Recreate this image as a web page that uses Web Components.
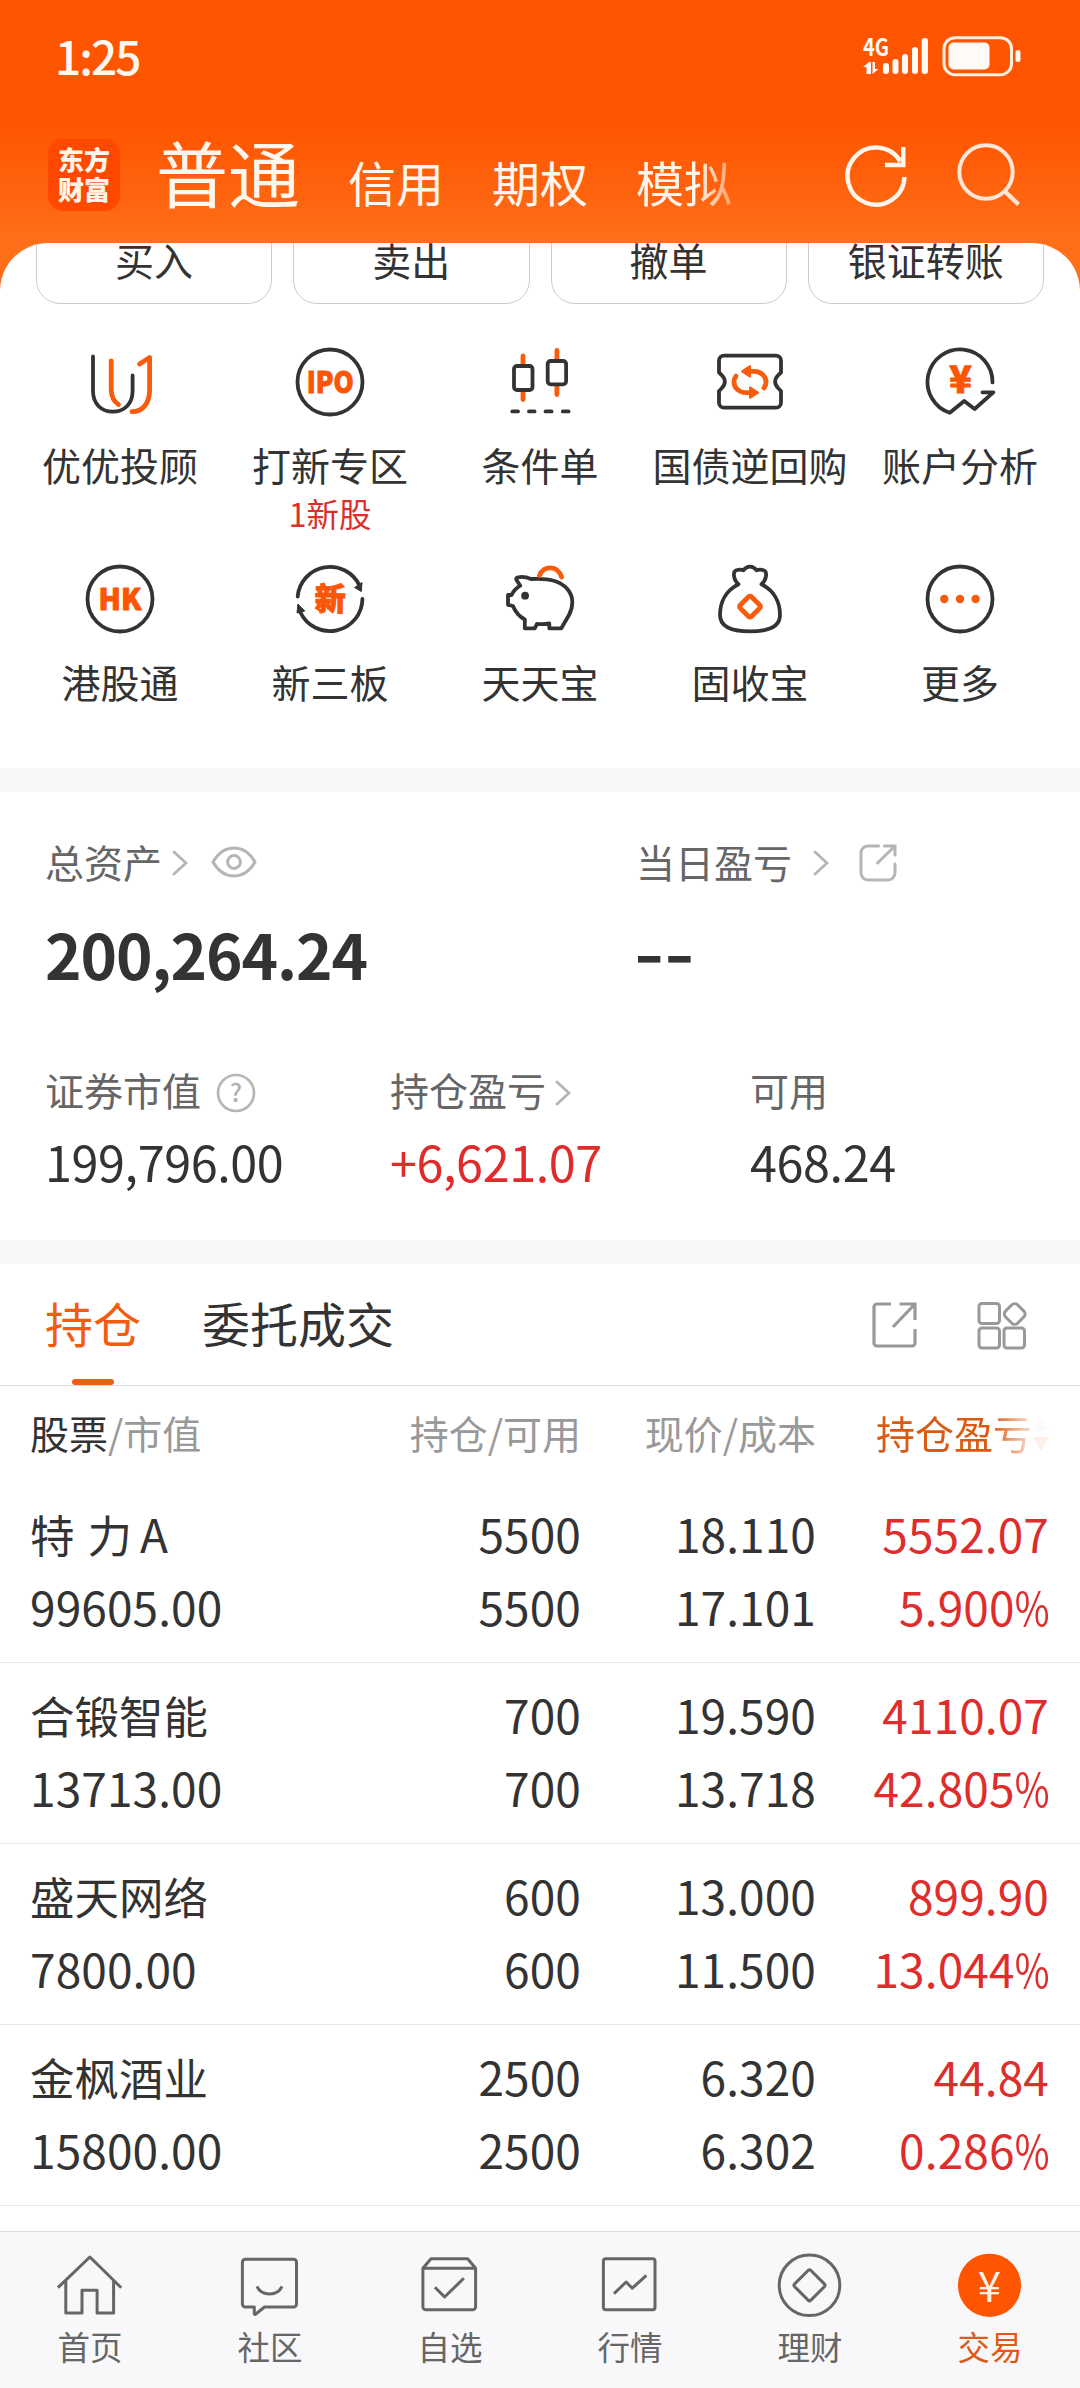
<!DOCTYPE html>
<html lang="zh-CN">
<head>
<meta charset="utf-8">
<title>交易</title>
<style>
html,body{margin:0;padding:0}
body{width:1080px;height:2388px;overflow:hidden;background:#fff;color:#333;font-family:"Noto Sans CJK SC",sans-serif;-webkit-font-smoothing:antialiased}
</style>
</head>
<body>
<trade-app></trade-app>
<script>
const D='stroke="#333" stroke-width="3.8" fill="none" stroke-linejoin="round" stroke-linecap="round"';
const O='stroke="#f95c0d" stroke-width="4.8" fill="none" stroke-linejoin="round" stroke-linecap="round"';
const G='stroke="#666" stroke-width="3" fill="none" stroke-linejoin="round"';
const OT='fill="#fb5607" stroke="#fb5607" stroke-width="1" stroke-linejoin="round" font-weight="900" text-anchor="middle" font-family="Noto Sans CJK SC, sans-serif"';
const ICONS={
 uu:[72,72,`<path ${D} d="M9 10.5V45C9 58 17.5 65.7 28.8 65.7S48.6 58 48.6 45V29.5"/><path ${O} d="M27.2 15V44Q27.6 54 34.5 58.5M55.5 18 65.6 11.5V44C65.6 58 58 65.7 47.9 65.7"/>`],
 ipo:[72,72,`<circle cx="36" cy="36" r="32.5" ${D}/><text x="36.3" y="47" font-size="30" textLength="47" lengthAdjust="spacingAndGlyphs" ${OT}>IPO</text>`],
 candle:[72,72,`<path ${O} d="M19 10V18M19 46V53.5M52.9 4.5V13M52.9 40V48.5"/><rect x="10" y="20" width="18.5" height="24" rx="3" ${D}/><rect x="43.7" y="15" width="18.4" height="23.3" rx="3" ${D}/><path ${D} stroke-width="4.2" d="M8.3 65.4H14M25 65.4H30.6M41.5 65.4H47.6M58.8 65.4H64.6"/>`],
 ticket:[72,72,`<path ${D} d="M10 9.7H62a5 5 0 0 1 5 5V26.5L64.5 28.8C60 33 60 38 64.5 42.5L67 45V56.7a5 5 0 0 1-5 5H10a5 5 0 0 1-5-5V45L7.5 42.5C12 38 12 33 7.5 28.8L5 26.5V14.7a5 5 0 0 1 5-5Z"/><g id="h"><path ${O} d="M36 25.4H40C48 25.4 52 31 52 36Q52 39.5 50 42"/><path d="M28 25.4 36 20.2V30.6Z" fill="#f95c0d" stroke="#f95c0d" stroke-width="2" stroke-linejoin="round"/></g><use href="#h" transform="rotate(180 36 36)"/>`],
 analysis:[72,72,`<path ${D} stroke-linejoin="miter" d="M68.5 36.4A32.5 32.5 0 1 0 25.8 66.8L40.2 55 50.6 63 69.3 46.3H58.5"/><text x="36.5" y="46.8" font-size="37" ${OT}>¥</text>`],
 hk:[72,72,`<circle cx="36" cy="36" r="32.5" ${D}/><text x="36" y="47" font-size="30" textLength="43" lengthAdjust="spacingAndGlyphs" ${OT}>HK</text>`],
 xsb:[72,72,`<path ${D} d="M3.7 33.5A32.5 32.5 0 0 1 65.5 22.5M68.4 36A32.5 32.5 0 0 1 6.5 49.5"/><path fill="#333" d="M60.6 24.500 68 19.500 67.300 28.500ZM3.900 41 3 50 10.800 48Z" stroke="#333" stroke-linejoin="round"/><text x="36.3" y="47.2" font-size="31" ${OT}>新</text>`],
 pig:[72,72,`<path ${D} d="M4 32H7.6Q10 26.500 16.300 22.700L12.500 17Q11.500 14.800 14 14.300Q20 13 27 16Q42 15.300 49 17.500C62 21 68.300 30 68.300 39Q68.300 46 65 52L57.300 65.300H45.300V60.500Q39 61.500 33 60.800L30.800 65.300H20.800V56.500Q12.500 52 9 43L4 41.800Z"/><circle cx="21.100" cy="32.700" r="3.900" fill="#333"/><path ${O} d="M35.500 12.500C39.500 2 53.500 2 57.600 14"/>`],
 bag:[72,72,`<path ${D} d="M24.500 21.300C19.500 17 17.500 7 24 6.800Q27 6.200 29.500 7.300Q32 3.600 36 3.600T42.500 7.300Q45 6.200 48 6.800C54.500 7 52.500 17 47.500 21.300C60 27.500 66 39 66 52C66 64 53 68.400 36 68.400S6 64 6 52C6 39 12 27.500 24.500 21.300Z"/><rect x="28" y="35.600" width="16" height="16" rx="2" transform="rotate(45 36 43.600)" ${O} />`],
 more:[72,72,`<circle cx="36" cy="36" r="32.500" ${D}/><g fill="#f35c0e"><circle cx="20.300" cy="36" r="4.200"/><circle cx="36" cy="36" r="4.200"/><circle cx="51.600" cy="36" r="4.200"/></g>`],
 refresh:[72,72,`<path d="M64.500 37A28.500 28.500 0 1 1 60.500 21.500M63.300 7V25H45" fill="none" stroke="#fff5ec" stroke-width="4.400"/>`],
 search:[72,72,`<g fill="none" stroke="#ffe6d6"><circle cx="33" cy="32" r="26.700" stroke-width="4"/><path d="M52 51.500 65.500 64.500" stroke-width="4.400"/></g>`],
 chevron:[16,26,`<path d="M2 2 14 13 2 24" fill="none" stroke="#b5b5b5" stroke-width="2.800" stroke-linecap="round"/>`],
 eye:[46,34,`<path d="M2 17Q10 3 23 3T44 17Q36 31 23 31T2 17Z" fill="none" stroke="#b5b5b5" stroke-width="3" stroke-linejoin="round"/><circle cx="23" cy="17" r="6.400" fill="none" stroke="#b5b5b5" stroke-width="3"/>`],
 share:[38,38,`<path d="M19.500 2H9a7 7 0 0 0-7 7V29a7 7 0 0 0 7 7H29a7 7 0 0 0 7-7V20M25.500 2H36V11M35 3 18.500 19" fill="none" stroke="#b5b5b5" stroke-width="3" stroke-linecap="round"/>`],
 help:[40,40,`<circle cx="20" cy="20" r="18" fill="none" stroke="#b5b5b5" stroke-width="2.600"/><text x="20" y="29" font-size="25" fill="#b0b0b0" text-anchor="middle" font-weight="500" font-family="Noto Sans CJK SC, sans-serif">?</text>`],
 share2:[48,48,`<path d="M20 3H6a3 3 0 0 0-3 3V42a3 3 0 0 0 3 3H41a3 3 0 0 0 3-3V28M28.500 3H44V19M43 4 22 26" fill="none" stroke="#999" stroke-width="3.200"/>`],
 grid:[50,50,`<g fill="none" stroke="#999" stroke-width="3"><rect x="2" y="2.500" width="20.500" height="20" rx="3"/><rect x="2" y="27" width="20.500" height="20" rx="3"/><rect x="27" y="27" width="20.500" height="20" rx="3"/><rect x="29.200" y="4.500" width="17" height="17" rx="4" transform="rotate(45 37.700 13)"/></g>`],
 home:[72,72,`<path ${G} stroke-linejoin="miter" d="M3.900 38.700 35.900 8 67.200 38.700M11.800 32V64H28V41.300H43.100V64H59.600V32"/>`],
 social:[72,72,`<path ${G} d="M11.400 10.300H59.500a3 3 0 0 1 3 3V55a3 3 0 0 1-3 3H30.500L21.200 65.500 20.300 65V58H11.400a3 3 0 0 1-3-3V13.300a3 3 0 0 1 3-3ZM22.900 37.300Q26.500 45 35.500 45T48 37.300"/>`],
 watch:[72,72,`<path ${G} d="M8.900 19.300 17 9.700H53.600L61.600 19.300V57.700a3 3 0 0 1-3 3H11.900a3 3 0 0 1-3-3ZH61.600M20.900 38.300 30.600 48 49.800 29.300"/>`],
 quote:[72,72,`<rect ${G} x="9.400" y="9.700" width="51.600" height="51" rx="2.500"/><path ${G} stroke-width="3.400" stroke-linejoin="miter" d="M20 44.700 32.100 33 38.300 39.200 52.400 26.300"/>`],
 wealth:[72,72,`<circle ${G} stroke-width="2.800" cx="35.500" cy="36.300" r="30.300"/><rect ${G} x="24" y="24.800" width="23" height="23" rx="2" transform="rotate(45 35.500 36.300)"/>`],
 trade:[72,72,`<circle cx="35.500" cy="36.300" r="31.600" fill="#ff5500"/><text x="35.500" y="53.200" font-size="42" fill="#fff3e8" text-anchor="middle" font-family="Noto Sans CJK SC, sans-serif">¥</text>`],
 sort:[18,36,`<path d="M9 1 17 15H1Z" fill="#ddd"/><path d="M9 35 17 21H1Z" fill="#fa9a6e"/>`],
 status:[160,42,`<g fill="#fffaf5"><text x="0" y="20" font-size="24" font-weight="700" textLength="26" lengthAdjust="spacingAndGlyphs" font-family="Noto Sans CJK SC, sans-serif">4G</text><path d="M0 31 6 26V38H3.500V31ZM15.500 33 9.500 38V26H12V33ZM6 26H8V38H6Z"/><rect x="20" y="27" width="6" height="11" rx="3"/><rect x="29.500" y="23" width="6" height="15" rx="3"/><rect x="39" y="18" width="6" height="20" rx="3"/><rect x="49" y="11" width="6" height="27" rx="3"/><rect x="58.700" y="2" width="6.300" height="36" rx="3"/><rect x="85.500" y="6.500" width="41" height="27" rx="5"/><rect x="152.500" y="14" width="5" height="12" rx="2.500"/></g><rect x="81" y="1.700" width="67.500" height="37" rx="11" fill="none" stroke="#fff0e2" stroke-width="3"/>`]
};
class Base extends HTMLElement{
  connectedCallback(){
    if(this.shadowRoot)return;
    const t=document.createElement('template');
    t.innerHTML=`<style>${this.css()}</style>${this.html()}`;
    this.attachShadow({mode:'open'}).append(t.content.cloneNode(true));
  }
  a(n){return this.getAttribute(n)||''}
}
const def=(n,css,html)=>customElements.define(n,class extends Base{css(){return css}html(){return html(this)}});

customElements.define('x-icon',class extends Base{
  css(){const[w,h]=ICONS[this.a('name')];return `:host{display:block;flex:none;width:${w}px;height:${h}px}svg{display:block}`}
  html(){const[w,h,s]=ICONS[this.a('name')];return `<svg width="${w}" height="${h}" viewBox="0 0 ${w} ${h}">${s}</svg>`}
});

def('status-bar',`:host{display:flex;justify-content:space-between;align-items:flex-start;padding:36px 57px 0 55px;height:76px}
 .t{font-size:46px;line-height:38px;font-weight:500;color:#fff8f0;letter-spacing:-2px}`,
 ()=>`<div class="t">1:25</div><x-icon name="status"></x-icon>`);

def('app-logo',`:host{display:flex;flex-direction:column;align-items:center;justify-content:center;width:72px;height:72px;border-radius:15px;background:#ff4800;flex:none}
 div{font-size:26px;line-height:30px;font-weight:900;color:#fff6ea}div:last-child{padding-bottom:2px}`,
 ()=>`<div>东方</div><div>财富</div>`);

def('account-header',`:host{display:flex;height:131px;padding-left:48px;align-items:flex-start}
 app-logo{margin-top:27px}
 nav{display:flex;gap:48px;align-items:baseline;margin:14px 0 0 36px;color:#fff7ee;font-size:48px;line-height:90px;white-space:nowrap}
 b{font-weight:400;font-size:72px}
 span:last-child{-webkit-mask:linear-gradient(90deg,#000 62%,rgba(0,0,0,.4));mask:linear-gradient(90deg,#000 62%,rgba(0,0,0,.4))}
 .r{margin:28px 0 0 108px}.s{margin:28px 0 0 41px}`,
 ()=>`<app-logo></app-logo><nav><b>普通</b><span>信用</span><span>期权</span><span>模拟</span></nav><x-icon class="r" name="refresh"></x-icon><x-icon class="s" name="search"></x-icon>`);

def('order-button',`:host{display:flex;flex:1;height:88px;align-items:center;justify-content:center;border:1px solid #ccc;border-radius:24px;font-size:39px;line-height:50px}`,()=>`<slot></slot>`);

def('feature-item',`:host{display:flex;flex-direction:column;align-items:center;height:217px}
 .l{margin-top:21px;font-size:39px;line-height:50px;white-space:nowrap}
 .n{font-size:32.500px;line-height:48px;color:#db2f2d}`,
 e=>`<x-icon name="${e.a('icon')}"></x-icon><div class="l"><slot></slot></div>${e.a('note')?`<div class="n">${e.a('note')}</div>`:''}`);

def('feature-panel',`:host{display:block;height:525px;background:#fff;border-radius:48px 48px 0 0;overflow:hidden}
 .b{display:flex;gap:21px;padding:0 36px;margin-top:-29px}
 .g{display:grid;grid-template-columns:repeat(5,210px);padding:42px 15px 0}`,
 ()=>`<div class="b">${['买入','卖出','撤单','银证转账'].map(x=>`<order-button>${x}</order-button>`).join('')}</div>
 <div class="g">${[['uu','优优投顾'],['ipo','打新专区','1新股'],['candle','条件单'],['ticket','国债逆回购'],['analysis','账户分析'],['hk','港股通'],['xsb','新三板'],['pig','天天宝'],['bag','固收宝'],['more','更多']].map(([i,l,n])=>`<feature-item icon="${i}" note="${n||''}">${l}</feature-item>`).join('')}</div>`);

def('asset-stat',`:host{display:block}
 .l{display:flex;align-items:center;height:50px;font-size:39px;line-height:50px;color:#666;white-space:nowrap}
 .v{font-size:48.500px;line-height:60px;margin-top:17px;color:#333;white-space:nowrap;letter-spacing:-.4px}
 :host([big]) .v{font-size:62px;line-height:80px;font-weight:700;margin-top:27px;letter-spacing:-1.1px}
 :host([up]) .v{color:#e02b2b}`,
 e=>`<div class="l"><span>${e.a('label')}</span><slot></slot></div><div class="v"><slot name="value"></slot></div>`);

def('asset-summary',`:host{display:block;height:404px;padding:44px 45px 0;background:#fff}
 .a{display:grid;grid-template-columns:591px 1fr}
 .c{display:grid;grid-template-columns:345px 360px 1fr;margin-top:71px}
 .dash{display:inline-block;letter-spacing:0;transform-origin:0 50%;transform:translate(-2px,-3px) scaleX(1.32)}`,
 ()=>`<div class="a">
 <asset-stat big label="总资产"><x-icon name="chevron" style="margin:4px 0 0 10px"></x-icon><x-icon name="eye" style="margin:1px 0 0 23px"></x-icon><span slot="value">200,264.24</span></asset-stat>
 <asset-stat big label="当日盈亏"><x-icon name="chevron" style="margin:4px 0 0 21px"></x-icon><x-icon name="share" style="margin:4px 0 0 30px"></x-icon><span slot="value" class="dash">--</span></asset-stat></div>
 <div class="c">
 <asset-stat label="证券市值"><x-icon name="help" style="margin:8px 0 0 15px"></x-icon><span slot="value">199,796.00</span></asset-stat>
 <asset-stat up label="持仓盈亏"><x-icon name="chevron" style="margin:8px 0 0 9px"></x-icon><span slot="value">+6,621.07</span></asset-stat>
 <asset-stat label="可用"><span slot="value">468.24</span></asset-stat></div>`);

def('tab-item',`:host{display:flex;flex-direction:column;align-items:center;padding-top:33px;font-size:48px;line-height:50px;white-space:nowrap}
 :host([active]){color:#f35b10}
 i{display:none;width:42px;height:6px;border-radius:3px;background:#f35b10;margin-top:32px}
 :host([active]) i{display:block}`,()=>`<slot></slot><i></i>`);

def('holdings-tabs',`:host{display:flex;height:121px;padding-left:45px;gap:61px;border-bottom:1px solid #ddd;background:#fff}
 .i{display:flex;margin:37px 53px 0 auto;gap:58px;align-items:flex-start}`,
 ()=>`<tab-item active>持仓</tab-item><tab-item>委托成交</tab-item><div class="i"><x-icon name="share2"></x-icon><x-icon name="grid"></x-icon></div>`);

const COLS='display:grid;grid-template-columns:300px 251px 235px 234px;padding-left:30px;';
def('holdings-head',`:host{${COLS}height:91px;padding-bottom:5px;align-items:center;font-size:39px;line-height:50px;color:#999;white-space:nowrap}
 div{text-align:right}.f{text-align:left}b{font-weight:400;color:#333}
 .p{display:flex;justify-content:flex-end;align-items:center;color:#db5a12;-webkit-mask:linear-gradient(90deg,#000 175px,rgba(0,0,0,.15) 218px);mask:linear-gradient(90deg,#000 175px,rgba(0,0,0,.15) 218px)}
 x-icon{margin-top:5px}`,
 ()=>`<div class="f"><b>股票</b>/市值</div><div>持仓/可用</div><div>现价/成本</div><div class="p">持仓盈亏<x-icon name="sort"></x-icon></div>`);

def('holding-row',`:host{${COLS}padding-top:15px;padding-bottom:19px;border-bottom:1px solid #e8e8e8;font-size:46px;line-height:73px;white-space:nowrap;letter-spacing:.1px}
 div{text-align:right}.f{text-align:left}.n{font-size:44.500px;letter-spacing:0;word-spacing:3px}.u{color:#dd2e2d;padding-right:1px}
 i{font-style:normal;display:inline-block;transform:scaleX(.82);transform-origin:100% 50%;margin-left:-8px}`,
 e=>`<div class="f n"><slot></slot></div>`+e.a('values').split('|').map((x,i)=>`<div class="${['','','u','f'][i%4]}">${x.replace('%','<i>%</i>')}</div>`).join(''));

def('nav-item',`:host{display:flex;flex-direction:column;align-items:center;flex:1;color:#666;font-size:32.500px;line-height:40px}
 :host([active]){color:#e05a15}div{margin-top:5px}`,e=>`<x-icon name="${e.a('icon')}"></x-icon><div><slot></slot></div>`);

def('bottom-nav',`:host{display:flex;box-sizing:border-box;height:157px;padding-top:17px;border-top:1px solid #ddd;background:#f8f8fb}`,
 ()=>[['home','首页'],['social','社区'],['watch','自选'],['quote','行情'],['wealth','理财']].map(([i,l])=>`<nav-item icon="${i}">${l}</nav-item>`).join('')+`<nav-item icon="trade" active>交易</nav-item>`);

def('trade-app',`:host{display:flex;flex-direction:column;width:1080px;height:2388px;overflow:hidden;background:linear-gradient(#ff5500 0,#ff5500 125px,#ff6f1a 245px,#ff711c 300px,#fff 300px)}
 main{flex:1;background:#fff;overflow:hidden}.s{height:24px;background:#f7f7fa}.x{margin-left:8px;font-size:46px}`,
 ()=>`<status-bar></status-bar><account-header></account-header><feature-panel></feature-panel><div class="s"></div><asset-summary></asset-summary><div class="s"></div>
 <main><holdings-tabs></holdings-tabs><holdings-head></holdings-head>
 <holding-row values="5500|18.110|5552.07|99605.00|5500|17.101|5.900%">特 力<span class="x">A</span></holding-row>
 <holding-row values="700|19.590|4110.07|13713.00|700|13.718|42.805%">合锻智能</holding-row>
 <holding-row values="600|13.000|899.90|7800.00|600|11.500|13.044%">盛天网络</holding-row>
 <holding-row values="2500|6.320|44.84|15800.00|2500|6.302|0.286%">金枫酒业</holding-row></main>
 <bottom-nav></bottom-nav>`);
</script>
</body>
</html>
